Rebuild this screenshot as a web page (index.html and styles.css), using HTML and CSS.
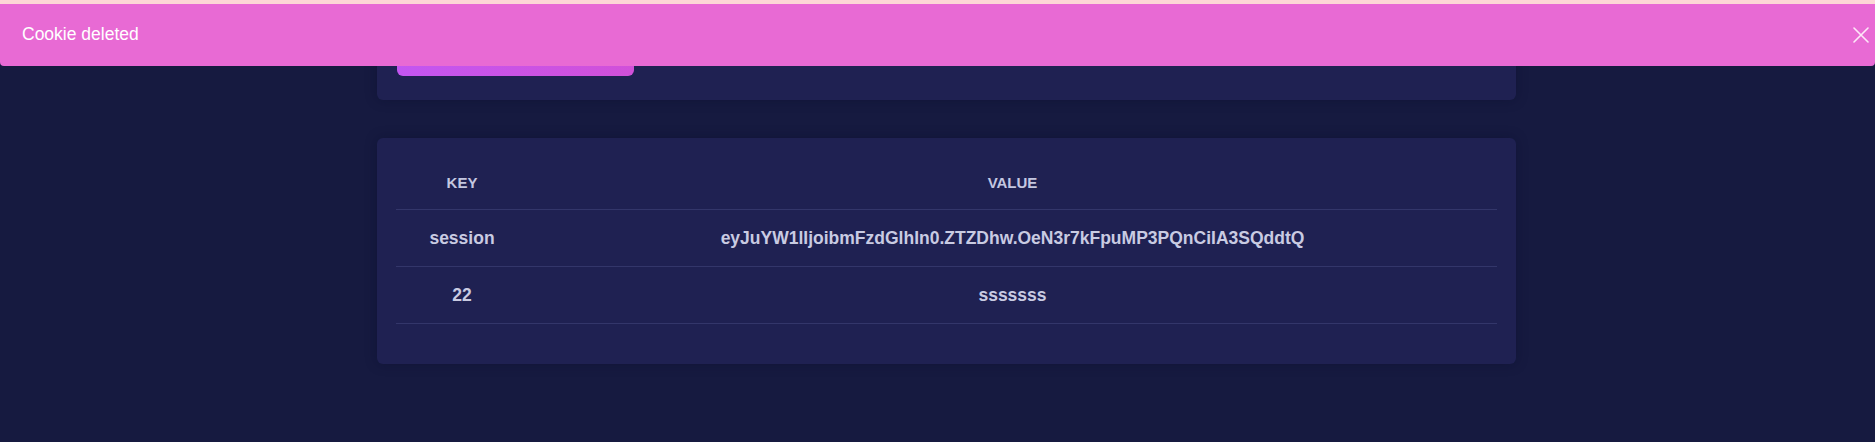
FILE: index.html
```html
<!DOCTYPE html>
<html lang="en">
<head>
<meta charset="utf-8">
<title>Cookies</title>
<link rel="stylesheet" href="styles.css">
</head>
<body>
<main class="page">
  <section class="card card-form">
    <button class="btn-primary" type="button">Add cookie</button>
  </section>
  <section class="card card-table">
    <table class="kv-table">
      <thead>
        <tr><th class="col-key">Key</th><th class="col-value">Value</th></tr>
      </thead>
      <tbody>
        <tr><td>session</td><td>eyJuYW1lIjoibmFzdGlhIn0.ZTZDhw.OeN3r7kFpuMP3PQnCiIA3SQddtQ</td></tr>
        <tr><td>22</td><td>sssssss</td></tr>
      </tbody>
    </table>
  </section>
</main>
<div class="toast-layer">
  <div class="toast-strip"></div>
  <div class="toast">
    <span class="toast-text">Cookie deleted</span>
    <button class="toast-close" type="button" aria-label="Close">
      <svg width="16" height="16" viewBox="0 0 16 16" fill="none" stroke="currentColor" stroke-width="1.6" stroke-linecap="round"><path d="M1 1L15 15M15 1L1 15"/></svg>
    </button>
  </div>
</div>
</body>
</html>
```
FILE: styles.css
```css
html, body {
  margin: 0;
  padding: 0;
}
body {
  background: #161a40;
  font-family: "Liberation Sans", Arial, sans-serif;
  color: #c8cbe2;
  height: 442px;
  overflow: hidden;
}
.page {
  width: 1139px;
  margin-left: 377px;
  display: flex;
  flex-direction: column;
  gap: 38px;
}
.card {
  background: #1f2152;
  border-radius: 6px;
  box-shadow: 0 0 12px rgba(10, 12, 40, 0.35);
  box-sizing: border-box;
}
.card-form {
  padding: 36px 20px 24px;
  border-top-left-radius: 0;
  border-top-right-radius: 0;
}
.btn-primary {
  display: block;
  width: 237px;
  height: 40px;
  border: 0;
  border-radius: 6px;
  background: linear-gradient(90deg, #c356f1, #d150d9);
  color: #fff;
  font: bold 16px "Liberation Sans", Arial, sans-serif;
}
.card-table {
  padding: 17px 19px 40px;
}
.kv-table {
  width: 100%;
  border-collapse: collapse;
  table-layout: fixed;
}
.kv-table th,
.kv-table td {
  text-align: center;
  border-bottom: 1px solid #33366a;
  padding: 0;
  font-weight: bold;
}
.kv-table th {
  height: 54px;
  font-size: 15px;
  text-transform: uppercase;
  color: #c4c7e0;
}
.kv-table td {
  height: 55px;
  padding-top: 1px;
  font-size: 17.5px;
  color: #c9cbe2;
}
.col-key {
  width: 132px;
}
.toast-layer {
  position: fixed;
  top: 0;
  left: 0;
  right: 0;
}
.toast-strip {
  height: 4px;
  background: #fdd7d6;
}
.toast {
  height: 62px;
  background: #e86ad4;
  border-radius: 0 0 4px 4px;
  display: flex;
  align-items: center;
  justify-content: space-between;
  padding: 0 6px 0 22px;
  box-sizing: border-box;
}
.toast-text {
  color: #fff;
  font-size: 17.5px;
  margin-top: -1px;
}
.toast-close {
  background: none;
  border: 0;
  padding: 0;
  width: 16px;
  height: 16px;
  color: #fde8f8;
  display: flex;
}
```
